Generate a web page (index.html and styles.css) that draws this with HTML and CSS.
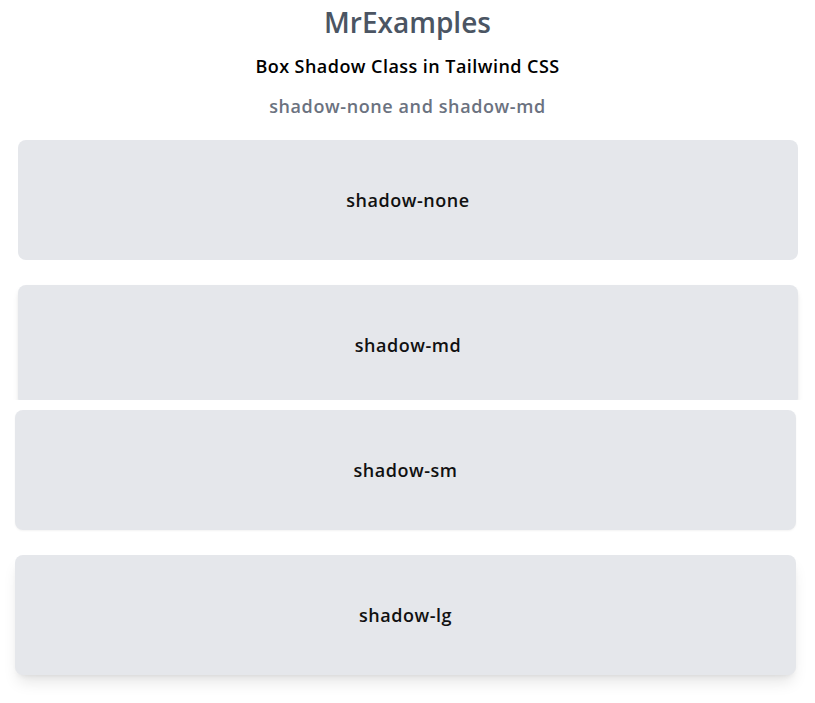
FILE: index.html
```html
<!DOCTYPE html>
<html lang="en">
<head>
    <meta charset="UTF-8">
    <title>Box Shadow Class in Tailwind CSS</title>
    <link rel="stylesheet" href="styles.css">
</head>
<body>
    <div class="shot shot-top">
        <header class="intro">
            <h1 class="title">MrExamples</h1>
            <h2 class="subtitle">Box Shadow Class in Tailwind CSS</h2>
            <h3 class="caption">shadow-none and shadow-md</h3>
        </header>
        <div class="stack stack-top">
            <div class="card shadow-none">shadow-none</div>
            <div class="card shadow-md">shadow-md</div>
        </div>
    </div>
    <div class="shot shot-bottom">
        <div class="stack stack-bottom">
            <div class="card shadow-sm">shadow-sm</div>
            <div class="card shadow-lg">shadow-lg</div>
        </div>
    </div>
</body>
</html>
```
FILE: styles.css
```css
body {
    margin: 0;
    padding: 0;
    background: #fff;
    font-family: "Open Sans", "Noto Sans", Arial, sans-serif;
}
.shot {
    overflow: hidden;
}
.shot-top {
    height: 400px;
}
.shot-bottom {
    padding: 10px 0 28px 0;
}
.intro {
    padding-top: 4px;
    text-align: center;
}
.title {
    margin: 0;
    font-size: 28px;
    line-height: 36px;
    font-weight: 600;
    color: #4b5563;
}
.subtitle {
    margin: 12px 0 0 0;
    font-size: 18px;
    line-height: 28px;
    font-weight: 600;
    letter-spacing: 0.45px;
    color: #000;
}
.caption {
    margin: 12px 0 0 0;
    font-size: 18px;
    line-height: 28px;
    font-weight: 600;
    letter-spacing: 0.6px;
    color: #6b7280;
}
.stack {
    display: flex;
    flex-direction: column;
    gap: 25px;
}
.stack-top {
    margin: 20px 17px 0 18px;
}
.stack-bottom {
    margin: 0 19px 0 15px;
}
.card {
    height: 120px;
    display: flex;
    align-items: center;
    justify-content: center;
    background: #e5e7eb;
    border-radius: 8px;
    font-size: 18px;
    font-weight: 600;
    letter-spacing: 0.55px;
    color: #111;
}
.shadow-none {
    box-shadow: none;
}
.shadow-sm {
    box-shadow: 0 1px 2px 0 rgba(0,0,0,0.05);
}
.shadow-md {
    box-shadow: 0 4px 6px -1px rgba(0,0,0,0.1), 0 2px 4px -2px rgba(0,0,0,0.1);
}
.shadow-lg {
    box-shadow: 0 10px 15px -3px rgba(0,0,0,0.1), 0 4px 6px -4px rgba(0,0,0,0.1);
}
```
